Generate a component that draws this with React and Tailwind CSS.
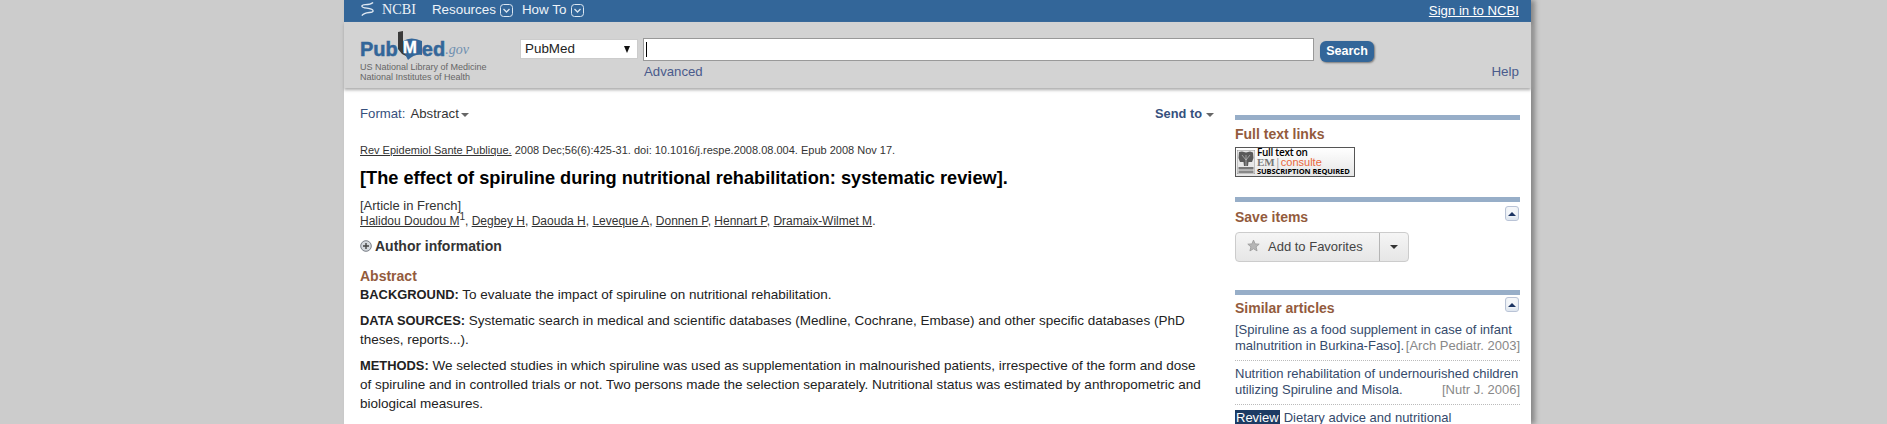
import React from "react";

const Chevron = () => (
    <svg width="13" height="13" viewBox="0 0 13 13" fill="none" stroke="#dbe6f1" strokeWidth="1">
        <rect x="0.5" y="0.5" width="12" height="12" rx="3" />
        <path d="M3.5 5 L6.5 8 L9.5 5" strokeWidth="1.3" />
    </svg>
);

const Collapse = () => (
    <div className="w-[14px] h-[15px] rounded-[3px] border border-[#b9c3d6] bg-[#f4f6f9] flex items-center justify-center shadow-[inset_0_-3px_3px_#dfe7f0]">
        <div className="w-0 h-0 border-x-[4px] border-x-transparent border-b-[4px] border-b-[#1c3463]" />
    </div>
);

const SideHead = ({ children, collapse }) => (
    <div className="flex justify-between items-start">
        <h3 className="text-[14px] leading-[17px] font-bold text-[#935b3d]">{children}</h3>
        {collapse && <div className="-mt-[3px] mr-[1px]"><Collapse /></div>}
    </div>
);

const Author = ({ children }) => <a className="underline text-[#333]">{children}</a>;

const Label = ({ children }) => <b className="text-[12.9px]">{children}</b>;

const Logo = () => (
    <div className="flex items-end h-[31px] text-[#336699] font-bold text-[20px] leading-[20px] [-webkit-text-stroke:0.5px_#336699]">
        <span>Pub</span>
        <div className="relative w-[24px] h-[24px] shrink-0">
            <svg width="24" height="24" viewBox="0 0 24 24" className="absolute left-0 bottom-0 overflow-visible">
                <path d="M0 -3 L5 -4 L5 14 L10 22 L4 19 L0 14 Z" fill="#3a3a3a" />
                <path d="M5 6 Q13 1 24 6 L24 20 Q16 19 10 25 L5 15 Z" fill="#336699" />
            </svg>
            <span className="absolute left-[5px] top-[4px] text-white text-[17px] leading-[17px] [-webkit-text-stroke:0.3px_white]">M</span>
        </div>
        <span>ed</span>
        <span className="font-['Liberation_Serif',serif] italic font-normal text-[14px] leading-[18px] text-[#6f8fb0] [-webkit-text-stroke:0px]">.gov</span>
    </div>
);

const Elsevier = () => (
    <div className="w-[120px] h-[30px] border border-[#555] bg-gradient-to-b from-white to-[#e6e6e6] flex items-center pl-[1px]">
        <svg width="18" height="24" viewBox="0 0 18 24" className="shrink-0">
            <rect x="0" y="0" width="18" height="24" fill="#e8e8e8" stroke="#666" strokeWidth="0.6" />
            <path d="M2 2 L5 1.5 L9 2.5 L13 1.5 L16 2.5 L16.5 8 L15 12 L11.5 12 L11 16 L7 16 L6.5 12 L3 12 L1.5 8 Z" fill="#5a5a5a" />
            <path d="M9 16 V5 M9 10 L5 5 M9 10 L13 5" stroke="#cfcfcf" strokeWidth="0.6" fill="none" />
            <rect x="1.5" y="17" width="15" height="2.5" fill="#777" />
            <rect x="1.5" y="20.5" width="15" height="2.5" fill="#888" />
        </svg>
        <div className="ml-[2px] flex flex-col font-['Open_Sans',sans-serif] text-black leading-[9px]">
            <span className="text-[10px] font-semibold tracking-[-0.3px]">Full text on</span>
            <span className="text-[11px]">
                <span className="font-['Liberation_Serif',serif] text-[#777] font-bold">EM</span>
                <span className="text-[#999]">|</span>
                <span className="text-[#e8683c] font-['Liberation_Sans',sans-serif]">consulte</span>
            </span>
            <span className="text-[7.5px] font-bold tracking-[-0.1px] whitespace-nowrap">SUBSCRIPTION REQUIRED</span>
        </div>
    </div>
);

export default function App() {
    return (
        <div className="h-[424px] overflow-hidden bg-[#cccccc] font-['Liberation_Sans',Arial,sans-serif]">
            <div className="ml-[344px] w-[1187px] h-[424px] bg-white shadow-[4px_0_5px_#888]">
                {/* ncbi bar */}
                <div className="h-[22px] bg-[#336699] flex items-center justify-between pl-[16px] pr-[12px] text-[#eef3f8] text-[13.4px]">
                    <div className="flex items-center">
                        <svg width="15" height="17" viewBox="0 0 16 17" fill="none" stroke="#dfe8f2" strokeWidth="1.4" className="-mt-[3px]">
                            <path d="M14 1 C9 5 2 2 2 5 C2 8 14 6 14 10 C14 13 5 10 2 15" />
                        </svg>
                        <span className="font-['Liberation_Serif',serif] text-[14.2px] ml-[7px] mr-[16px] -mt-[3px]">NCBI</span>
                        <span className="-mt-[1px]">Resources</span>
                        <span className="ml-[4px] -mt-[1px]"><Chevron /></span>
                        <span className="ml-[9px] -mt-[1px]">How To</span>
                        <span className="ml-[5px] -mt-[1px]"><Chevron /></span>
                    </div>
                    <a className="underline text-white text-[13.2px] -mt-[1px]">Sign in to NCBI</a>
                </div>

                {/* search header */}
                <div className="h-[66px] bg-[#d3d3d3] flex pl-[16px] pr-[12px] shadow-[0_2px_3px_#aaa] relative">
                    <div className="w-[160px] shrink-0 pt-[6px]">
                        <Logo />
                        <p className="text-[9px] leading-[10px] text-[#666] mt-[3px] whitespace-nowrap">US National Library of Medicine<br />National Institutes of Health</p>
                    </div>
                    <div className="pt-[17px]">
                        <div className="w-[118px] h-[20px] bg-white border border-[#ccc] flex items-center justify-between px-[4px] text-[13.4px] text-[#222]">
                            PubMed
                            <span className="w-0 h-0 border-x-[3.5px] border-x-transparent border-t-[7px] border-t-[#111] mr-[3px]" />
                        </div>
                    </div>
                    <div className="ml-[5px] pt-[16px]">
                        <div className="w-[671px] h-[23px] bg-white border border-[#999] flex items-center pl-[2px]">
                            <div className="w-px h-[15px] bg-black" />
                        </div>
                        <a className="block text-[13.2px] leading-[16px] text-[#4a5b8c] mt-[3px] ml-[1px]">Advanced</a>
                    </div>
                    <div className="ml-[6px] pt-[19px]">
                        <div className="w-[54px] h-[21px] rounded-[6px] bg-[#336699] text-white text-[12.5px] font-bold flex items-center justify-center shadow-[1px_1px_2px_#777]">Search</div>
                    </div>
                    <a className="ml-auto self-end mb-[8px] text-[13.4px] leading-[16px] text-[#4a5b8c]">Help</a>
                </div>

                <div className="flex pl-[16px] pr-[11px]">
                    {/* article */}
                    <div className="w-[854px] shrink-0 text-[#333]">
                        <div className="flex justify-between items-center h-[16px] mt-[18px]">
                            <div className="flex items-center text-[13.2px]">
                                <span className="text-[#36507d]">Format:</span>
                                <span className="ml-[5px] text-[#333]">Abstract</span>
                                <span className="ml-[2px] mt-[2px] w-0 h-0 border-x-[4px] border-x-transparent border-t-[4px] border-t-[#666]" />
                            </div>
                            <div className="flex items-center text-[#36507d] font-bold text-[12.8px]">
                                Send to
                                <span className="ml-[4px] mt-[1px] w-0 h-0 border-x-[4px] border-x-transparent border-t-[4px] border-t-[#666]" />
                            </div>
                        </div>
                        <p className="text-[11px] leading-[14px] mt-[21px]"><a className="underline">Rev Epidemiol Sante Publique.</a> 2008 Dec;56(6):425-31. doi: 10.1016/j.respe.2008.08.004. Epub 2008 Nov 17.</p>
                        <h1 className="text-[18.2px] leading-[22px] font-bold text-black mt-[10px]">[The effect of spiruline during nutritional rehabilitation: systematic review].</h1>
                        <p className="text-[13px] leading-[16px] mt-[9px]">[Article in French]</p>
                        <p className="text-[12px] leading-[15px]">
                            <Author>Halidou Doudou M</Author><sup className="text-[10px] leading-none">1</sup>, <Author>Degbey H</Author>, <Author>Daouda H</Author>, <Author>Leveque A</Author>, <Author>Donnen P</Author>, <Author>Hennart P</Author>, <Author>Dramaix-Wilmet M</Author>.
                        </p>
                        <div className="flex items-center mt-[9px] h-[16px]">
                            <svg width="12" height="12" viewBox="0 0 12 12" className="mr-[3px]">
                                <circle cx="6" cy="6" r="5.3" fill="#d5d9de" stroke="#7a7f88" />
                                <path d="M3 6 H9 M6 3 V9" stroke="#444" strokeWidth="1.4" />
                            </svg>
                            <span className="text-[14px] font-bold">Author information</span>
                        </div>
                        <h3 className="text-[14px] leading-[16px] font-bold text-[#935b3d] mt-[14px]">Abstract</h3>
                        <div className="max-w-[844px] text-[13.5px] leading-[19px] text-[#222]">
                            <p className="mt-[1px]"><Label>BACKGROUND:</Label> To evaluate the impact of spiruline on nutritional rehabilitation.</p>
                            <p className="mt-[7px]"><Label>DATA SOURCES:</Label> Systematic search in medical and scientific databases (Medline, Cochrane, Embase) and other specific databases (PhD theses, reports...).</p>
                            <p className="mt-[7px]"><Label>METHODS:</Label> We selected studies in which spiruline was used as supplementation in malnourished patients, irrespective of the form and dose of spiruline and in controlled trials or not. Two persons made the selection separately. Nutritional status was estimated by anthropometric and biological measures.</p>
                        </div>
                    </div>

                    {/* sidebar */}
                    <div className="w-[285px] ml-[21px] shrink-0 pt-[27px]">
                        <div className="h-[5px] bg-[#97aec8]" />
                        <div className="mt-[6px]"><SideHead>Full text links</SideHead></div>
                        <div className="mt-[4px]"><Elsevier /></div>

                        <div className="h-[5px] bg-[#97aec8] mt-[20px]" />
                        <div className="mt-[7px]"><SideHead collapse>Save items</SideHead></div>
                        <div className="mt-[6px] w-[174px] h-[30px] rounded-[4px] border border-[#ccc] bg-gradient-to-b from-[#f5f5f5] to-[#e6e6e6] flex text-[13px] text-[#444]">
                            <div className="w-[144px] border-r border-[#b5b5b5] flex items-center pl-[11px]">
                                <svg width="13" height="13" viewBox="0 0 24 24" fill="#b5b5b5" stroke="#999" strokeWidth="1.5" className="mr-[8px] -mt-[3px]">
                                    <path d="M12 2 L15 9 L22.5 9.5 L16.8 14.5 L18.6 22 L12 18 L5.4 22 L7.2 14.5 L1.5 9.5 L9 9 Z" />
                                </svg>
                                Add to Favorites
                            </div>
                            <div className="flex-1 flex items-center justify-center">
                                <span className="w-0 h-0 border-x-[4px] border-x-transparent border-t-[4px] border-t-[#333]" />
                            </div>
                        </div>

                        <div className="h-[5px] bg-[#97aec8] mt-[28px]" />
                        <div className="mt-[5px]"><SideHead collapse>Similar articles</SideHead></div>
                        <div className="text-[13px] leading-[16px] text-[#354a6b]">
                            <div className="mt-[5px] pb-[6px] border-b border-dotted border-[#bbb]">
                                <p className="whitespace-nowrap">[Spiruline as a food supplement in case of infant</p>
                                <p className="flex justify-between whitespace-nowrap">malnutrition in Burkina-Faso].<span className="text-[#888]">[Arch Pediatr. 2003]</span></p>
                            </div>
                            <div className="mt-[5px] pb-[6px] border-b border-dotted border-[#bbb]">
                                <p className="whitespace-nowrap">Nutrition rehabilitation of undernourished children</p>
                                <p className="flex justify-between whitespace-nowrap">utilizing Spiruline and Misola.<span className="text-[#888]">[Nutr J. 2006]</span></p>
                            </div>
                            <div className="mt-[5px] whitespace-nowrap">
                                <span className="bg-[#1c3b63] text-white px-[1px] mr-[4px]">Review</span>Dietary advice and nutritional
                            </div>
                        </div>
                    </div>
                </div>
            </div>
        </div>
    );
}
